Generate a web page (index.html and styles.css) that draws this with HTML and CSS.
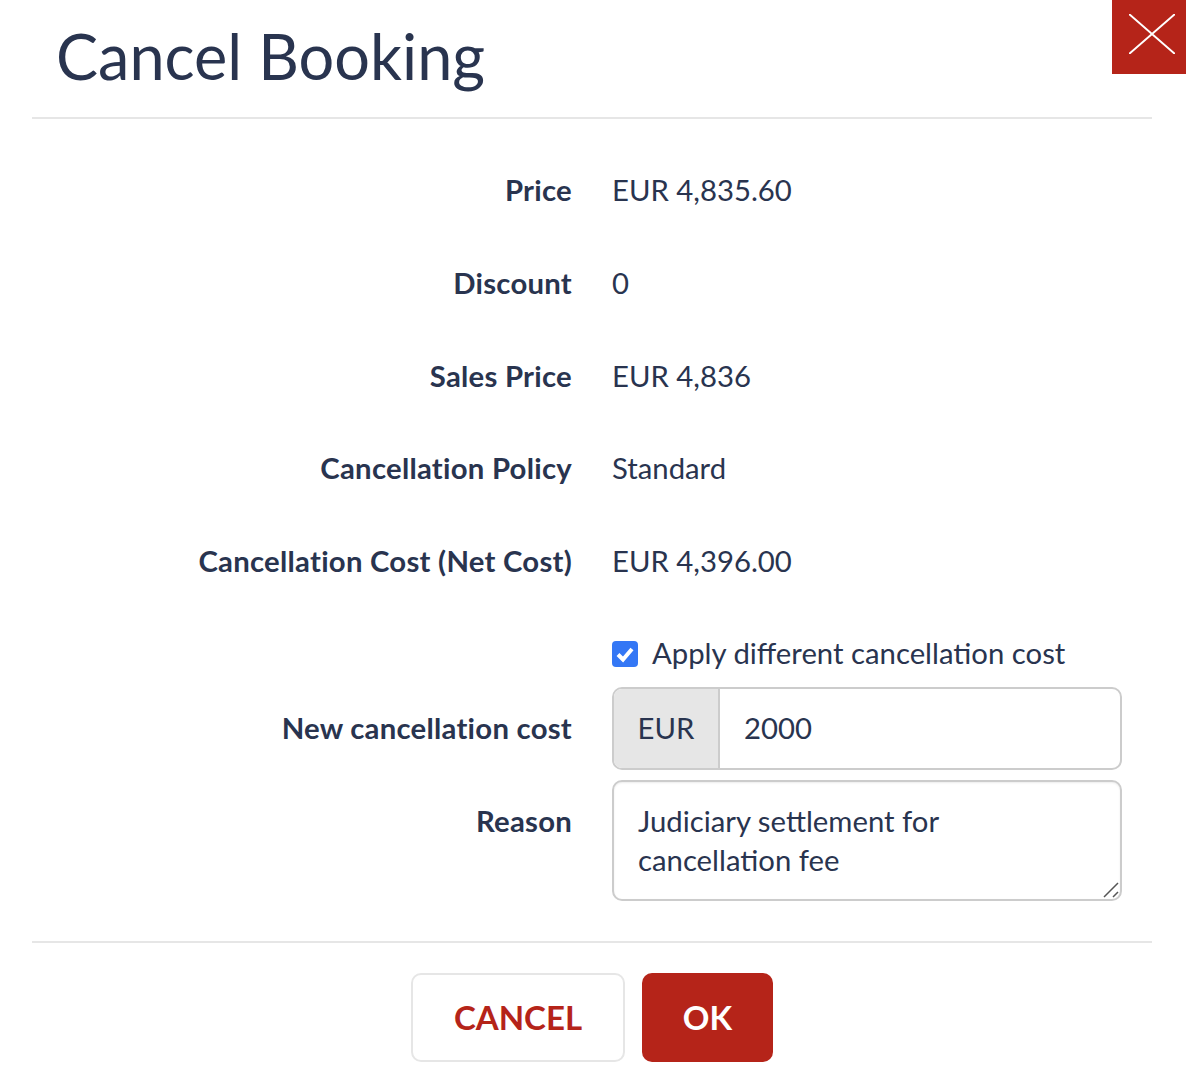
FILE: index.html
```html
<!DOCTYPE html>
<html lang="en">
<head>
    <meta charset="UTF-8">
    <meta name="viewport" content="width=device-width, initial-scale=1.0">
    <title>Cancel Booking</title>
    <link rel="stylesheet" href="styles.css">
</head>
<body>
    <div class="modal">
        <button class="closeBtn" aria-label="Close">
            <svg width="46" height="40" viewBox="0 0 46 40"><path d="M0 0L46 40M46 0L0 40" stroke="#fff" stroke-width="2" fill="none"/></svg>
        </button>

        <div class="modalHeader">
            <h1>Cancel Booking</h1>
        </div>

        <div class="modalBody">
            <div class="row">
                <div class="label">Price</div>
                <div class="value">EUR 4,835.60</div>
            </div>
            <div class="row">
                <div class="label">Discount</div>
                <div class="value">0</div>
            </div>
            <div class="row">
                <div class="label">Sales Price</div>
                <div class="value">EUR 4,836</div>
            </div>
            <div class="row">
                <div class="label">Cancellation Policy</div>
                <div class="value">Standard</div>
            </div>
            <div class="row">
                <div class="label">Cancellation Cost (Net Cost)</div>
                <div class="value">EUR 4,396.00</div>
            </div>

            <div class="checkRow">
                <span class="checkbox">
                    <svg width="26" height="26" viewBox="0 0 26 26"><path d="M6 13.5L11 18.5L20 8" stroke="#fff" stroke-width="4" fill="none"/></svg>
                </span>
                <span class="checkLabel">Apply different cancellation cost</span>
            </div>

            <div class="formRow">
                <div class="label">New cancellation cost</div>
                <div class="inputGroup">
                    <span class="addon">EUR</span>
                    <span class="inputText">2000</span>
                </div>
            </div>

            <div class="formRow">
                <div class="label">Reason</div>
                <div class="textarea">
                    Judiciary settlement for<br>cancellation fee
                    <svg class="resizer" width="16" height="16" viewBox="0 0 16 16"><path d="M1 15L15 1M10 15L15 10" stroke="#555" stroke-width="1.5" fill="none"/></svg>
                </div>
            </div>
        </div>

        <div class="modalFooter">
            <button class="btn btnCancel">CANCEL</button>
            <button class="btn btnOk">OK</button>
        </div>
    </div>
</body>
</html>
```

FILE: styles.css
```css
body {
    margin: 0;
    background-color: #fff;
    font-family: Lato, "Noto Sans", sans-serif;
    color: #29344f;
}

.modal {
    position: relative;
    height: 1086px;
    padding: 0 34px 0 32px;
    box-sizing: border-box;
    overflow: hidden;
}

.closeBtn {
    position: absolute;
    top: 0;
    right: 0;
    width: 74px;
    height: 74px;
    padding: 0 0 6px 6px;
    border: none;
    background-color: #b52419;
    display: flex;
    align-items: center;
    justify-content: center;
}

.modalHeader {
    height: 117px;
    border-bottom: 2px solid #e6e6e6;
    padding-left: 24px;
}

h1 {
    margin: 0;
    padding-top: 18px;
    font-size: 63px;
    line-height: 76px;
    font-weight: 400;
}

.modalBody {
    height: 822px;
    padding-top: 26px;
    box-sizing: border-box;
    font-size: 29.3px;
    line-height: 40px;
}

.row {
    display: flex;
    gap: 40px;
    height: 92.75px;
    padding-top: 25px;
    box-sizing: border-box;
}

.label {
    width: 540px;
    text-align: right;
    font-weight: 700;
    letter-spacing: 0.25px;
}

.checkRow {
    display: flex;
    align-items: center;
    gap: 14px;
    margin: 20px 0 0 580px;
    padding-top: 4px;
    height: 40px;
}

.checkbox {
    width: 26px;
    height: 26px;
    margin-top: 2px;
    border-radius: 4px;
    background-color: #3477f5;
    display: block;
}

.checkbox svg {
    display: block;
}

.formRow {
    display: flex;
    gap: 40px;
    margin-top: 10px;
}

.checkRow + .formRow {
    margin-top: 14px;
}

.formRow .label {
    padding-top: 21px;
}

.inputGroup {
    width: 510px;
    height: 83px;
    box-sizing: border-box;
    border: 2px solid #ccc;
    border-radius: 10px;
    display: flex;
    overflow: hidden;
}

.addon {
    width: 106px;
    box-sizing: border-box;
    background-color: #e6e6e6;
    border-right: 2px solid #ccc;
    text-align: center;
    line-height: 78px;
}

.inputText {
    padding-left: 24px;
    line-height: 78px;
}

.textarea {
    position: relative;
    width: 510px;
    height: 121px;
    box-sizing: border-box;
    border: 2px solid #ccc;
    border-radius: 10px;
    box-shadow: inset 0 1px 2px rgba(0, 0, 0, 0.08);
    padding: 19px 24px 0;
    line-height: 39px;
}

.resizer {
    position: absolute;
    right: 1px;
    bottom: 1px;
}

.modalFooter {
    border-top: 2px solid #e6e6e6;
    display: flex;
    justify-content: center;
    gap: 17px;
    padding-top: 30px;
}

.btn {
    height: 89px;
    padding-bottom: 3px;
    border-radius: 10px;
    font-family: Lato, "Noto Sans", sans-serif;
    font-size: 33px;
    font-weight: 700;
}

.btnCancel {
    width: 214px;
    background-color: #fff;
    border: 2px solid #e6e6e6;
    color: #b52419;
}

.btnOk {
    width: 131px;
    background-color: #b52419;
    border: none;
    color: #fff;
}
```
